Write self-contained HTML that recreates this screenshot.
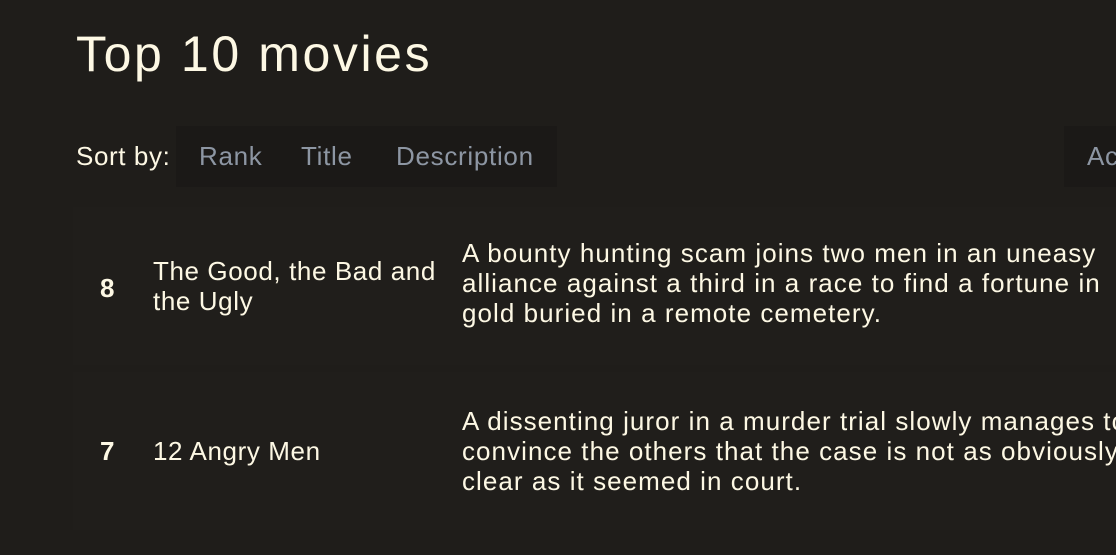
<!DOCTYPE html>
<html><head><style>
body{margin:0;width:1116px;height:555px;overflow:hidden;background:#1f1d1a;font-family:"Liberation Sans",sans-serif;color:#fdf8e4}
.t{position:absolute;left:76px;top:25px;font-size:50px;letter-spacing:2.6px;white-space:nowrap}
.s{position:absolute;left:76px;top:141px;font-size:26px;letter-spacing:0.6px}
.btns{position:absolute;left:176px;top:126px;width:381px;height:61px;background:#1b1917}
.b{position:absolute;top:141px;font-size:26px;letter-spacing:0.7px;color:#8d96a3}
.ab{position:absolute;left:1064px;top:126px;width:60px;height:61px;background:#1b1917}
.row{position:absolute;left:73px;width:1050px;height:158px;background:#201e1b}
.c{position:absolute;font-size:26px;line-height:30px;white-space:nowrap;letter-spacing:0.6px}
.d{letter-spacing:1.05px}
.r{font-weight:bold;left:27px}
</style></head><body>
<div class="t">Top 10 movies</div>
<div class="btns"></div><div class="ab"></div>
<div class="s">Sort by:</div>
<div class="b" style="left:199px">Rank</div>
<div class="b" style="left:301px">Title</div>
<div class="b" style="left:396px">Description</div>
<div class="b" style="left:1087px">Ac</div>
<div class="row" style="top:207px">
<div class="c r" style="top:66px">8</div>
<div class="c" style="left:80px;top:49px">The Good, the Bad and<br>the Ugly</div>
<div class="c d" style="left:389px;top:31px">A bounty hunting scam joins two men in an uneasy<br>alliance against a third in a race to find a fortune in<br>gold buried in a remote cemetery.</div>
</div>
<div class="row" style="top:372px">
<div class="c r" style="top:64px">7</div>
<div class="c" style="left:80px;top:64px">12 Angry Men</div>
<div class="c d" style="left:389px;top:34px">A dissenting juror in a murder trial slowly manages to<br>convince the others that the case is not as obviously<br>clear as it seemed in court.</div>
</div>
</body></html>
